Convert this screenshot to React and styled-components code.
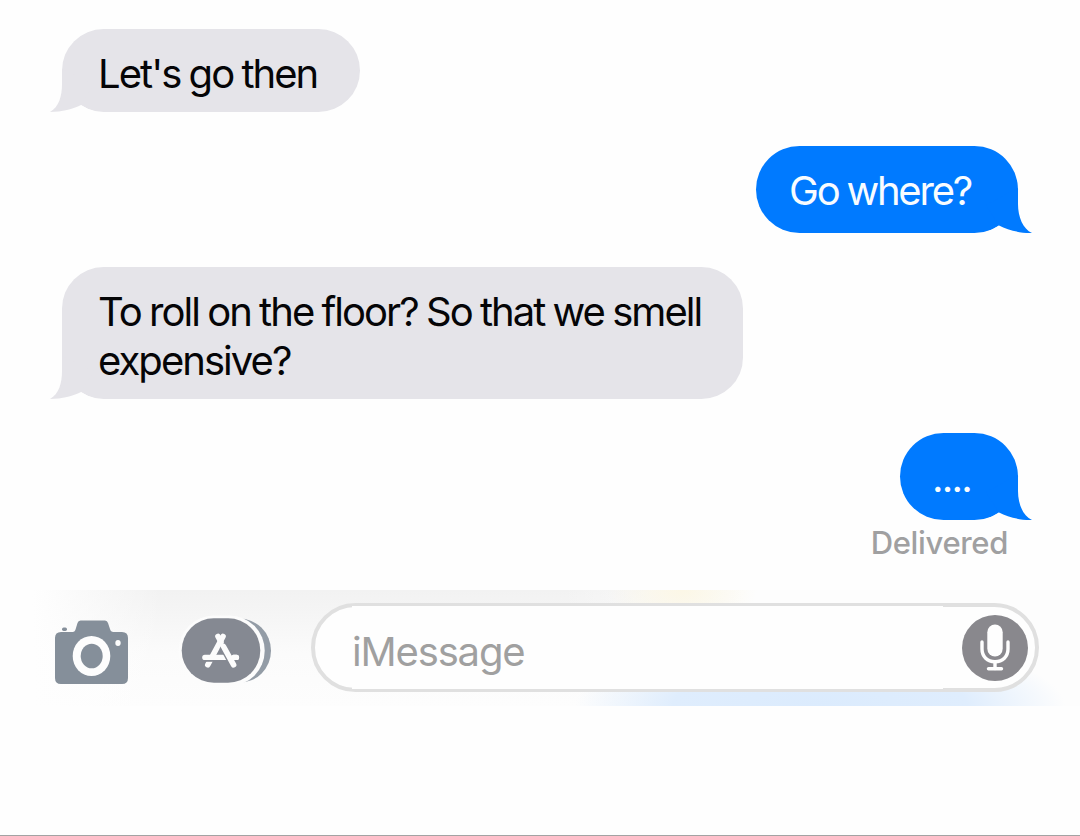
import React from "react";
import styled, { createGlobalStyle } from "styled-components";

const GREY = "#e5e4e9";
const BLUE = "#007aff";

const GlobalStyle = createGlobalStyle`
  body {
    margin: 0;
    background: #fefefe;
  }
  * {
    box-sizing: border-box;
  }
`;

const Screen = styled.div`
  display: flex;
  flex-direction: column;
  width: 1080px;
  height: 836px;
  overflow: hidden;
  background: #fefefe;
  border-bottom: 1px solid #a3a3a3;
  font-family: Inter, sans-serif;
`;

const Messages = styled.div`
  display: flex;
  flex-direction: column;
  gap: 34px;
  height: 590px;
  padding: 29px 62px 0;
`;

const Bubble = styled.div`
  position: relative;
  align-self: ${({ $sent }) => ($sent ? "flex-end" : "flex-start")};
  flex: none;
  width: ${({ $width }) => $width}px;
  height: ${({ $height }) => $height}px;
  padding: ${({ $padding }) => $padding};
  border-radius: ${({ $sent }) => ($sent ? "43.5px" : "41.5px")};
  background: ${({ $sent }) => ($sent ? BLUE : GREY)};
  color: ${({ $sent }) => ($sent ? "#f8fcff" : "#050507")};
  font-size: 40px;
  font-weight: ${({ $sent }) => ($sent ? 400 : 430)};
  line-height: 49px;
  letter-spacing: ${({ $spacing }) => $spacing || "-1.95px"};
  word-spacing: -1.1px;
  white-space: nowrap;
`;

const TailShape = styled.svg`
  position: absolute;
  bottom: 0;
  ${({ $sent }) => ($sent ? "right: -14px; transform: scaleX(-1);" : "left: -13px;")}
`;

const Delivered = styled.div`
  align-self: flex-end;
  margin-top: -30px;
  margin-right: 10px;
  color: #a0a0a1;
  font-size: 31px;
  font-weight: 500;
  line-height: 38px;
  letter-spacing: -0.35px;
`;

const Toolbar = styled.div`
  display: flex;
  align-items: flex-start;
  height: 116px;
  padding: 13px 41px 0 51px;
  background:
    radial-gradient(ellipse 75px 45px at 682px 0, #fcf7e6 0%, rgba(253, 250, 240, 0) 100%),
    radial-gradient(ellipse 245px 70px at 820px 116px, #dbebfd 0%, #dfedfd 60%, rgba(240, 247, 254, 0) 100%),
    linear-gradient(90deg, #fefefe 0%, #fefefe 3%, rgba(254, 254, 254, 0) 15%, rgba(254, 254, 254, 0) 52%, #fdfdfd 69%, #fdfdfd 100%),
    linear-gradient(180deg, #f2f2f2 0%, #f5f5f5 20%, #fbfbfb 55%, #fdfdfd 100%);
`;

const CameraIcon = styled.svg`
  flex: none;
  margin-top: 13px;
`;

const AppsIcon = styled.svg`
  flex: none;
  margin-top: 10px;
  margin-left: 44px;
`;

const Field = styled.div`
  position: relative;
  display: flex;
  align-items: flex-start;
  justify-content: space-between;
  flex: none;
  width: 728px;
  height: 89px;
  margin-left: 36px;
  padding: 8px 7px 0 37px;
  border: 4px solid #e0e0e0;
  border-radius: 44.5px;
  background: #fefefe;

  &::before {
    content: "";
    position: absolute;
    top: -1px;
    bottom: -1px;
    left: 37px;
    width: 591px;
    background: #fefefe;
  }
`;

const Placeholder = styled.span`
  position: relative;
  margin-top: 13px;
  color: #a0a0a0;
  font-size: 40px;
  line-height: 48px;
  letter-spacing: -1.15px;
`;

const MicIcon = styled.svg`
  position: relative;
  flex: none;
`;

const Tail = ({ sent }) => (
  <TailShape $sent={sent} width="46" height="48" viewBox="0 0 46 48">
    {sent ? (
      <>
        <path d="M20 48 L33 40.5 Q39 45 46 47 V48 Z" fill="#fefefe" />
        <path d="M14 3 V19 C14 32 9 44 0 48 C12 48.200 24 45 33 40.500 L46 20 Z" fill={BLUE} />
      </>
    ) : (
      <>
        <path d="M20 48 L32 41 Q38 45 46 47.500 V48 Z" fill="#fefefe" />
        <path d="M13 5 V20 C13 32 10 43 1 48 C13 48 24 45 32 41 L45 20 Z" fill={GREY} />
      </>
    )}
  </TailShape>
);

const Message = ({ sent, width, height, padding, spacing, children }) => (
  <Bubble $sent={sent} $width={width} $height={height} $padding={padding} $spacing={spacing}>
    <Tail sent={sent} />
    {children}
  </Bubble>
);

const Camera = () => (
  <CameraIcon width="82" height="72" viewBox="51 616 82 72">
    <g fill="#858f9a">
      <path d="M61 632 H72.500 C74.500 632 75 631 75.700 629 L77.500 623 Q78.200 620.500 80.500 620.500 H105 Q107.300 620.500 108 623 L110 629 C110.700 631.300 111.500 632 113.500 632 H122 Q128 632 128 638 V678 Q128 684 122 684 H61 Q55 684 55 678 V638 Q55 632 61 632 Z" />
      <rect x="62" y="627.500" width="5" height="3.500" rx="1.700" />
    </g>
    <ellipse cx="91.500" cy="656" rx="18.800" ry="20" fill="#fdfdfd" />
    <ellipse cx="91.700" cy="656" rx="11" ry="12.300" fill="#858f9a" />
    <ellipse cx="118" cy="643" rx="2.700" ry="3" fill="#fdfdfd" />
  </CameraIcon>
);

const Apps = () => (
  <AppsIcon width="98" height="74" viewBox="177 613 98 74">
    <rect x="192" y="618.500" width="79" height="64.300" rx="32" fill="#939ca6" />
    <rect x="178.700" y="615.500" width="86" height="70.500" rx="35.200" fill="#fcfcfc" />
    <rect x="181.700" y="618.300" width="78.600" height="64.400" rx="32.200" fill="#858992" />
    <g strokeLinecap="round" fill="none">
      <path d="M223 636.500 L207.800 664.800" stroke="#fcfcfc" strokeWidth="5.600" />
      <path d="M202 660.900 H226" stroke="#858992" strokeWidth="1.800" strokeLinecap="butt" />
      <path d="M204.800 657.400 H236.500" stroke="#fcfcfc" strokeWidth="5.200" />
      <path d="M223.500 646 L233.600 664.500" stroke="#858992" strokeWidth="8.800" strokeLinecap="butt" />
      <path d="M218 636.500 L221 642" stroke="#fcfcfc" strokeWidth="5.600" />
      <path d="M223.500 646.500 L233.600 664.800" stroke="#fcfcfc" strokeWidth="5.600" />
      <path d="M233.500 657.400 H236.500" stroke="#fcfcfc" strokeWidth="5.200" />
    </g>
  </AppsIcon>
);

const Mic = () => (
  <MicIcon width="66" height="66" viewBox="962 615 66 66">
    <circle cx="995" cy="648" r="33" fill="#89888d" />
    <rect x="987.300" y="624.500" width="15.400" height="32" rx="7.700" fill="#fefefe" />
    <g fill="none" stroke="#fefefe" strokeWidth="3.400" strokeLinecap="round">
      <path d="M982 642 V649 C982 656.500 987.300 661.700 995 661.700 S1008 656.500 1008 649 V642" />
      <path d="M995 662 V668.500" />
      <path d="M988.500 668.700 H1001.500" />
    </g>
  </MicIcon>
);

const App = () => (
  <>
    <GlobalStyle />
    <Screen>
      <Messages>
        <Message width={298} height={82.5} padding="20px 0 0 36px">Let's go then</Message>
        <Message sent width={262} height={87} padding="20px 0 0 33px" spacing="-2.2px">Go where?</Message>
        <Message width={681} height={132} padding="20px 0 0 36px">
          To roll on the floor? So that we smell
          <br />
          expensive?
        </Message>
        <Message sent width={118} height={87} padding="20px 0 0 32px" spacing="-1.8px">....</Message>
        <Delivered>Delivered</Delivered>
      </Messages>
      <Toolbar>
        <Camera />
        <Apps />
        <Field>
          <Placeholder>iMessage</Placeholder>
          <Mic />
        </Field>
      </Toolbar>
    </Screen>
  </>
);

export default App;
